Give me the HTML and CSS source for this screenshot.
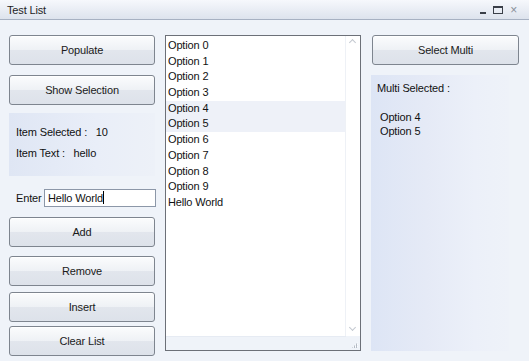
FILE: index.html
```html
<!DOCTYPE html>
<html lang="en">
<head>
    <meta charset="UTF-8">
    <title>Test List</title>
    <link rel="stylesheet" href="styles.css">
</head>
<body>
    <div class="window">
        <!-- Barra del titolo -->
        <div class="titlebar">
            <span class="title">Test List</span>
            <div class="controls">
                <span class="ctl-min"></span>
                <span class="ctl-max"></span>
                <span class="ctl-close">&#215;</span>
            </div>
        </div>

        <div class="content">
            <!-- Colonna sinistra -->
            <div class="col-left">
                <button class="btn b-populate">Populate</button>
                <button class="btn b-show">Show Selection</button>
                <div class="info">
                    <div class="info-row">Item Selected :&nbsp;&nbsp; 10</div>
                    <div class="info-row">Item Text :&nbsp;&nbsp; hello</div>
                </div>
                <div class="enter-row">
                    <label for="entry">Enter</label>
                    <div class="entry" id="entry">Hello World<span class="caret"></span></div>
                </div>
                <button class="btn b-add">Add</button>
                <button class="btn b-remove">Remove</button>
                <button class="btn b-insert">Insert</button>
                <button class="btn b-clear">Clear List</button>
            </div>

            <!-- Lista centrale -->
            <div class="listbox">
                <div class="list-inner">
                    <ul class="items">
                        <li>Option 0</li>
                        <li>Option 1</li>
                        <li>Option 2</li>
                        <li>Option 3</li>
                        <li class="sel">Option 4</li>
                        <li class="sel">Option 5</li>
                        <li>Option 6</li>
                        <li>Option 7</li>
                        <li>Option 8</li>
                        <li>Option 9</li>
                        <li>Hello World</li>
                    </ul>
                    <div class="vscroll">
                        <span class="arrow up"></span>
                        <span class="arrow down"></span>
                    </div>
                </div>
                <div class="hscroll"><span class="grip"></span></div>
            </div>

            <!-- Colonna destra -->
            <div class="col-right">
                <button class="btn b-multi">Select Multi</button>
                <div class="multi">
                    <div class="multi-title">Multi Selected :</div>
                    <div class="multi-list">
                        <div>Option 4</div>
                        <div>Option 5</div>
                    </div>
                </div>
            </div>
        </div>
    </div>
</body>
</html>
```

FILE: styles.css
```css
/* Stili di base */
body {
    margin: 0;
    padding: 0;
    font-family: "Liberation Sans", Arial, sans-serif;
    font-size: 11px;
    letter-spacing: -0.15px;
    color: #111;
    background: #eff3f9;
}

.window {
    width: 529px;
    height: 361px;
    background: #eff3f9;
    overflow: hidden;
}

/* Barra del titolo */
.titlebar {
    height: 19px;
    display: flex;
    align-items: center;
    justify-content: space-between;
    padding: 0 12px 0 7px;
    background: linear-gradient(#f6f8fc, #dde3ed);
    border-bottom: 1px solid #a7b1c2;
}

.title {
    font-size: 11px;
    color: #1e1e1e;
    padding-top: 1px;
}

.controls {
    display: flex;
    align-items: center;
    gap: 7px;
}

.ctl-min {
    width: 6px;
    height: 2px;
    background: #3a3f48;
    margin-top: 6px;
}

.ctl-max {
    width: 8px;
    height: 5px;
    border: 1px solid #3a3f48;
    border-top-width: 2px;
}

.ctl-close {
    font-size: 12px;
    color: #8a9099;
    line-height: 12px;
}

/* Contenuto */
.content {
    display: flex;
    padding: 15px 0 0 9px;
}

.col-left {
    width: 146px;
    display: flex;
    flex-direction: column;
}

.btn {
    display: block;
    width: 100%;
    height: 30px;
    padding: 0;
    font-family: "Liberation Sans", Arial, sans-serif;
    font-size: 11px;
    letter-spacing: -0.15px;
    color: #1a1a1a;
    border: 1px solid #7e858f;
    border-radius: 3px;
    background: linear-gradient(#fbfcfd 0%, #eef1f5 50%, #e2e6ed 51%, #dde2ea 100%);
    box-shadow: inset 0 1px 0 #ffffff;
}

.b-show { margin-top: 10px; }

.info {
    margin-top: 8px;
    height: 63px;
    padding: 12px 0 0 7px;
    box-sizing: border-box;
    background: linear-gradient(90deg, #dfe6f4, #e9eef8 60%, #edf1f8);
}

.info-row {
    height: 21px;
    line-height: 14px;
}

.enter-row {
    display: flex;
    align-items: center;
    margin-top: 13px;
    padding-left: 7px;
    height: 18px;
}

.enter-row label {
    width: 28px;
}

.entry {
    flex: 1;
    height: 16px;
    line-height: 16px;
    margin-right: -1px;
    padding-left: 3px;
    border: 1px solid #8c97a8;
    background: #fff;
}

.caret {
    display: inline-block;
    width: 1px;
    height: 13px;
    background: #000;
    vertical-align: -2px;
}

.b-add { margin-top: 10px; }
.b-remove { margin-top: 9px; }
.b-insert { margin-top: 6px; }
.b-clear { margin-top: 4px; }

/* Lista */
.listbox {
    width: 196px;
    height: 316px;
    margin-left: 10px;
    box-sizing: border-box;
    border: 1px solid #6c7078;
    background: #eff3f9;
    display: flex;
    flex-direction: column;
}

.list-inner {
    flex: 1;
    display: flex;
    background: #fff;
    border-bottom: 1px solid #e6ebf3;
    margin-right: 14px;
}

.items {
    list-style: none;
    margin: 0;
    padding: 2px 0 0 0;
    flex: 1;
}

.items li {
    height: 15.7px;
    line-height: 15.7px;
    padding-left: 2px;
}

.items li.sel {
    background: #eef1f8;
}

.vscroll {
    width: 14px;
    margin-right: -14px;
    position: relative;
    background: #fff;
    border-left: 1px solid #eef1f6;
}

.arrow {
    position: absolute;
    left: 4px;
    width: 4px;
    height: 4px;
    border-left: 1px solid #c3c8d0;
    border-top: 1px solid #c3c8d0;
}

.arrow.up {
    top: 4px;
    transform: rotate(45deg);
}

.arrow.down {
    bottom: 6px;
    transform: rotate(225deg);
}

.hscroll {
    height: 13px;
    position: relative;
}

/* maniglia di ridimensionamento a puntini */
.grip {
    position: absolute;
    right: 2px;
    bottom: 2px;
    width: 6px;
    height: 6px;
    background-image: linear-gradient(90deg, #a6adb8 1px, transparent 1px), linear-gradient(#fff 1px, transparent 1px);
    background-size: 2px 2px;
    clip-path: polygon(100% 0, 100% 100%, 0 100%);
    opacity: 0.8;
}

/* Colonna destra */
.col-right {
    width: 147px;
    margin-left: 11px;
}

.multi {
    margin-top: 10px;
    width: 138px;
    height: 276px;
    margin-left: -1px;
    padding: 7px 0 0 6px;
    box-sizing: border-box;
    background: linear-gradient(90deg, #dde5f5, #e5eaf6 40%, #ecf0f9 75%, #eef2f9);
}

.multi-list {
    margin-top: 16px;
    padding-left: 3px;
}

.multi-list div {
    height: 14px;
    line-height: 14px;
}
```
